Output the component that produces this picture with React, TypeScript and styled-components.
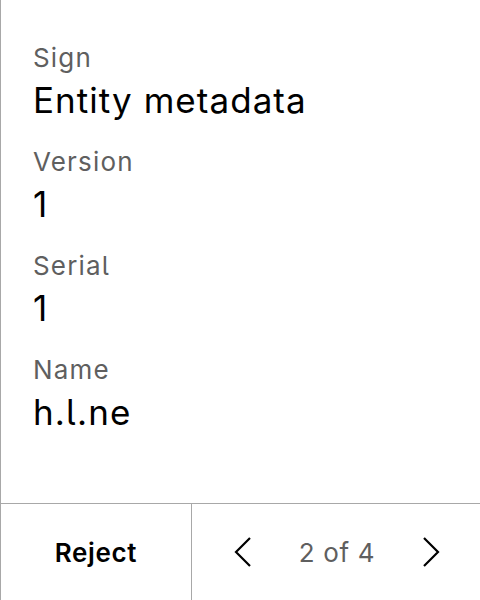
import styled, { createGlobalStyle } from 'styled-components';

const GlobalStyle = createGlobalStyle`
  html, body {
    margin: 0;
    padding: 0;
    background: #fff;
  }
  body {
    font-family: Inter, 'Noto Sans', sans-serif;
    font-feature-settings: 'cv05';
    letter-spacing: 0.04em;
    color: #000;
  }
`;

const fields = [
  { label: 'Sign', value: 'Entity metadata' },
  { label: 'Version', value: '1' },
  { label: 'Serial', value: '1' },
  { label: 'Name', value: 'h.l.ne' },
];

const Chevron = ({ dir }: { dir: 'left' | 'right' }) => (
  <svg width="18" height="30" viewBox="0 0 18 30" fill="none">
    <path
      d={dir === 'left' ? 'M16 1 L2 15 L16 29' : 'M2 1 L16 15 L2 29'}
      stroke="#000"
      strokeWidth="2.2"
    />
  </svg>
);

const App = () => {
  return (
    <Page>
      <GlobalStyle />
      <Details>
        {fields.map(f => (
          <Field key={f.label}>
            <Label>{f.label}</Label>
            <Value>{f.value}</Value>
          </Field>
        ))}
      </Details>
      <Footer>
        <RejectButton>Reject</RejectButton>
        <Pager>
          <NavButton aria-label="previous">
            <Chevron dir="left" />
          </NavButton>
          <Count>2 of 4</Count>
          <NavButton aria-label="next">
            <Chevron dir="right" />
          </NavButton>
        </Pager>
      </Footer>
    </Page>
  );
};

const Page = styled.div`
  height: 600px;
  display: flex;
  flex-direction: column;
  border-left: 1px solid #a8a8a8;
  box-sizing: border-box;
`;

const Details = styled.section`
  flex: 1;
  display: flex;
  flex-direction: column;
  gap: 26px;
  padding: 42px 0 0 32px;
`;

const Field = styled.div`
  display: flex;
  flex-direction: column;
  gap: 6px;
`;

const Label = styled.span`
  font-size: 26px;
  line-height: 32px;
  letter-spacing: 0.045em;
  color: #5f5f5f;
`;

const Value = styled.span`
  font-size: 35px;
  line-height: 40px;
  letter-spacing: 0.03em;
  color: #000;
`;

const Footer = styled.footer`
  height: 96px;
  border-top: 1px solid #a8a8a8;
  display: flex;
`;

const RejectButton = styled.button`
  width: 191px;
  border: none;
  border-right: 1px solid #a8a8a8;
  background: none;
  font-family: inherit;
  font-feature-settings: inherit;
  letter-spacing: inherit;
  font-size: 26px;
  font-weight: 600;
  color: #000;
  padding: 0;
`;

const Pager = styled.div`
  flex: 1;
  display: flex;
  align-items: center;
  justify-content: space-between;
  padding: 0 40px 0 42px;
`;

const NavButton = styled.button`
  border: none;
  background: none;
  padding: 0;
  display: flex;
`;

const Count = styled.span`
  font-size: 26px;
  color: #5f5f5f;
`;

export default App;
